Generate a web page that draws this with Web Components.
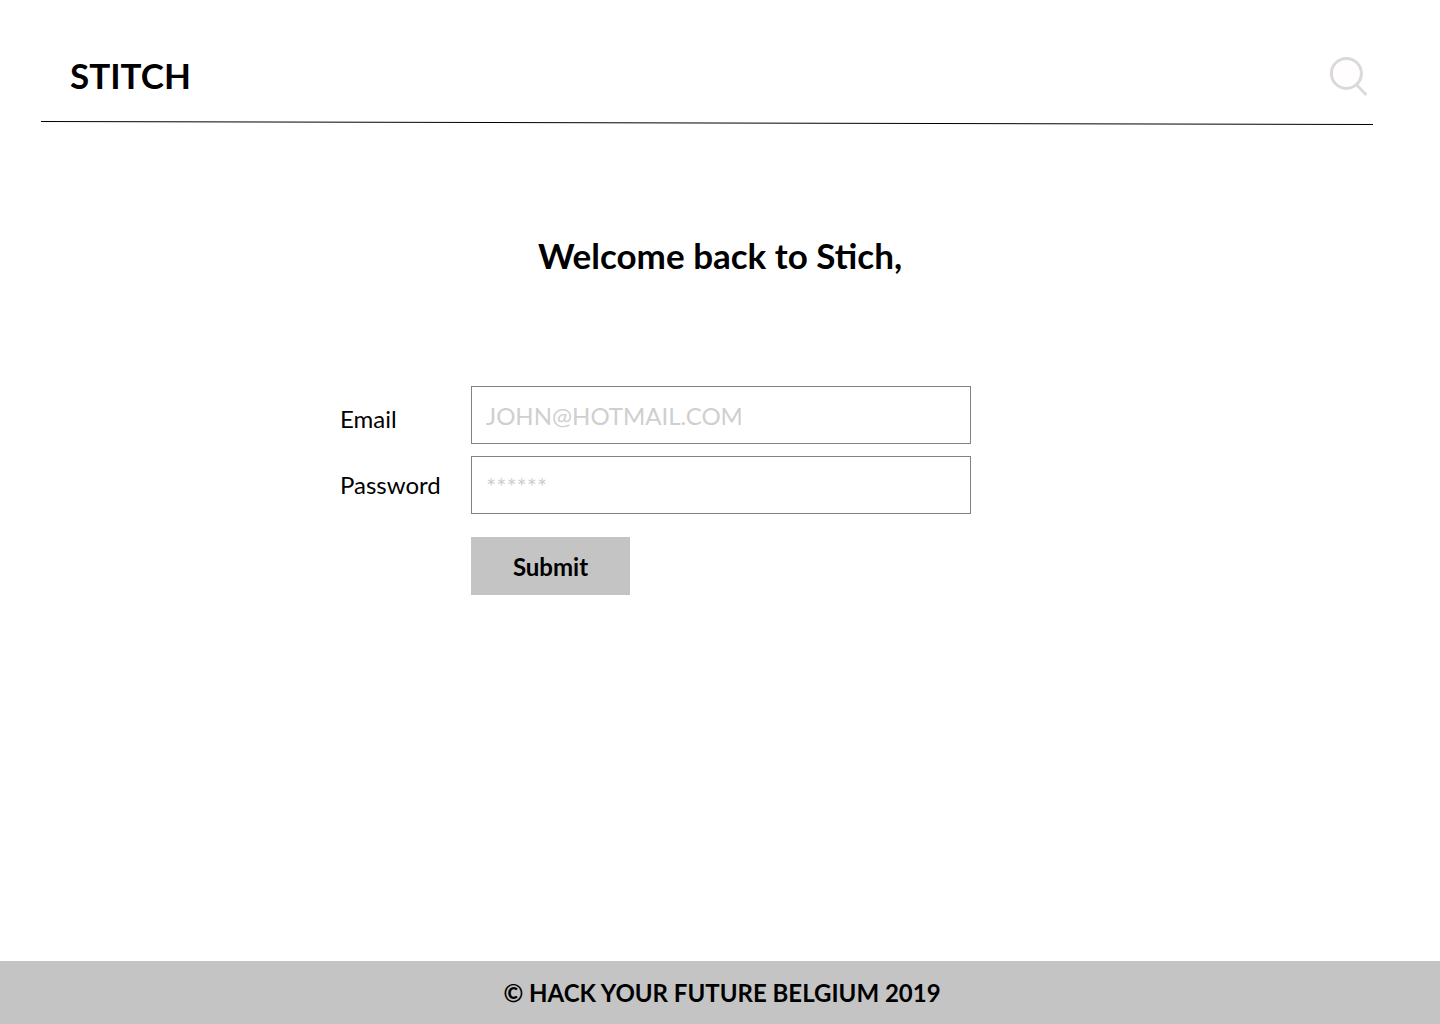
<!DOCTYPE html>
<html lang="en">
<head>
<meta charset="utf-8">
<title>Stitch</title>
<style>
html,body{margin:0;height:100%}
body{background:#fff;color:#000;font:24px/30px Lato,sans-serif}
</style>
</head>
<body>
<stitch-page>
  <stitch-header slot="header">STITCH</stitch-header>
  <stitch-login>Welcome back to Stich,</stitch-login>
  <stitch-footer slot="footer">© HACK YOUR FUTURE BELGIUM 2019</stitch-footer>
</stitch-page>
<script>
const define = (name, html) => customElements.define(name, class extends HTMLElement {
  constructor() {
    super();
    this.attachShadow({ mode: 'open' }).innerHTML = html;
  }
});

define('stitch-page', `
<style>
:host{display:flex;flex-direction:column;min-height:100vh}
main{flex:1}
</style>
<slot name="header"></slot><main><slot></slot></main><slot name="footer"></slot>`);

define('stitch-header', `
<style>
:host{display:block;padding:54px 67px 0 41px}
.bar{display:flex;justify-content:space-between;align-items:center;padding:0 4px 0 29px}
a{color:inherit;text-decoration:none;font-weight:700;font-size:35px;line-height:42px}
button{display:flex;border:0;padding:0;background:none;cursor:pointer}
.rule{display:block;width:100%;height:4px;margin-top:25px}
</style>
<div class="bar">
  <a href="#"><slot></slot></a>
  <button type="button" aria-label="Search">
    <svg width="40" height="42" viewBox="0 0 40 42" fill="none" stroke="#dadada" stroke-width="3"><circle cx="17.4" cy="19.4" r="15" fill="#fffdfd"/><path d="M27.3 30.6 37.4 41" stroke-width="2.8"/></svg>
  </button>
</div>
<svg class="rule" viewBox="0 0 1332 4" preserveAspectRatio="none"><path d="M0 .5 1332 3.5" stroke="#000"/></svg>`);

define('stitch-login', `
<style>
:host{display:block;padding-top:109px}
h1{margin:0;text-align:center;font-size:35px;line-height:42px;font-weight:700}
form{display:flex;justify-content:center;padding-right:129px;margin-top:110px}
.labels{display:flex;flex-direction:column;gap:36px;width:131px;padding-top:18px}
.fields{display:flex;flex-direction:column;gap:12px;width:500px}
input{box-sizing:border-box;width:100%;height:58px;border:1px solid #828282;padding:0 14px;font:inherit;background:#fff;color:#000;border-radius:0}
input::placeholder{color:#cfcfcf;opacity:1}
button{align-self:flex-start;width:159px;height:58px;margin-top:11px;border:0;background:#c4c4c4;color:#000;font:inherit;font-weight:700;padding:2px 0 0}
</style>
<h1><slot></slot></h1>
<form>
  <div class="labels">
    <label for="email">Email</label>
    <label for="password">Password</label>
  </div>
  <div class="fields">
    <input id="email" type="email" placeholder="JOHN@HOTMAIL.COM">
    <input id="password" type="password" placeholder="******">
    <button type="submit">Submit</button>
  </div>
</form>`);

define('stitch-footer', `
<style>
:host{display:block;background:#c4c4c4;padding:17px 0 16px 4px;text-align:center;font-weight:700}
</style>
<footer><slot></slot></footer>`);
</script>
</body>
</html>
